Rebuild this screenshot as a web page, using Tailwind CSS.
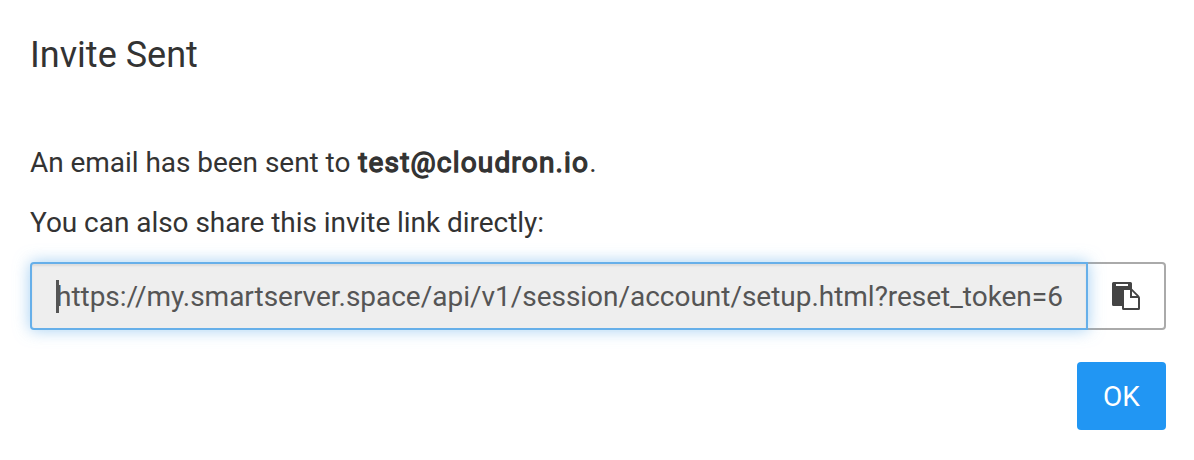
<!DOCTYPE html>
<html lang="en"><head><meta charset="utf-8"><title>Invite Sent</title>
<script src="https://cdn.jsdelivr.net/npm/@tailwindcss/browser@4"></script></head>
<body class="bg-white font-['Roboto',sans-serif] text-[#333]">
<main class="h-[460px] w-[1194px] overflow-hidden pl-[30px] pr-7 pt-[30px] text-[28px] leading-10">
<h1 class="h-[113px] text-[36px] leading-[50px]">Invite Sent</h1>
<p class="mb-5 tracking-[-0.045px]">An email has been sent to <b class="ml-px font-normal tracking-[1.17px] [-webkit-text-stroke:1.3px_#333]">test@cloudron.io</b>.</p>
<p class="mb-[19px] tracking-[-0.045px]">You can also share this invite link directly:</p>
<div class="flex h-[68px]">
<div class="z-10 flex w-[1058px] items-center rounded-l-[4px] border-2 border-[#66afe9] bg-[#eee] pl-6 pt-0.5 text-[#555] shadow-[inset_0_2px_2px_rgba(0,0,0,0.075),0_0_16px_rgba(102,175,233,0.6)]"><span class="relative whitespace-nowrap tracking-[-0.025px]">https://my.smartserver.space/api/v1/session/account/setup.html?reset_token=6<span class="absolute left-0 top-[3px] h-[33px] w-[3px] bg-[#555]"></span></span></div>
<button aria-label="Copy" class="-ml-0.5 flex w-20 items-center justify-center rounded-r-[4px] border-2 border-[#aaa] bg-white"><svg class="h-7 w-7" viewBox="0 0 28 28" fill="#444" fill-rule="evenodd"><path d="M1.500 0H18.500Q20 0 20 1.500V6.800L26.800 13.400Q28 14.600 28 16V26.500Q28 28 26.500 28H11.500Q10 28 10 26.500V24H1.500Q0 24 0 22.500V1.500Q0 0 1.500 0ZM4 2V4H16V2ZM12 8V26H26V16H18V8ZM20 9.300V14H24.700Z"/></svg></button>
</div>
<div class="mt-8 flex justify-end"><button class="h-[68px] w-[89px] rounded-[4px] bg-[#2196f3] pt-0.5 text-white">OK</button></div>
</main></body></html>
